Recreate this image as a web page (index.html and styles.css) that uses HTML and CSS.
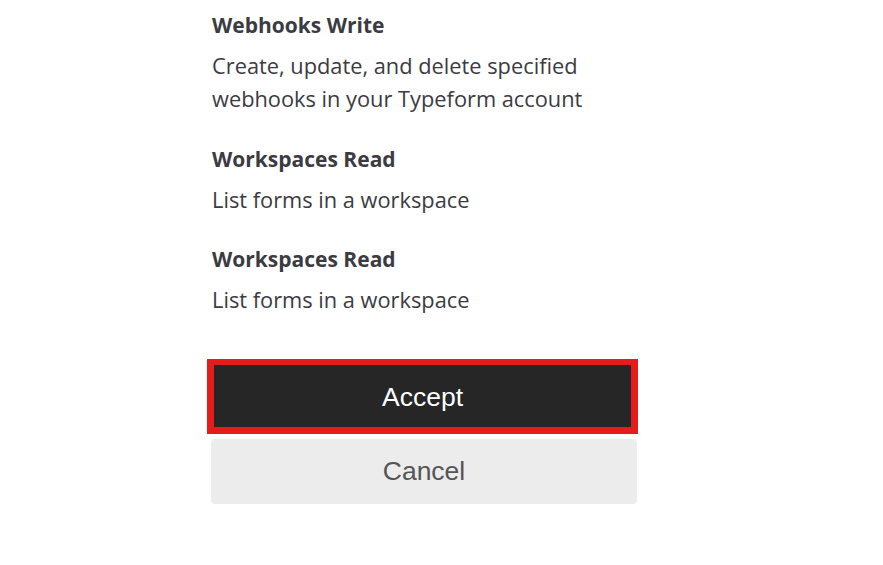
FILE: index.html
```html
<!DOCTYPE html>
<html>
<head>
<meta charset="utf-8">
<link rel="stylesheet" href="styles.css">
</head>
<body>
<div class="page">
  <div class="scopes">
    <div class="scope">
      <div class="scope-title">Webhooks Write</div>
      <div class="scope-desc">Create, update, and delete specified<br>webhooks in your Typeform account</div>
    </div>
    <div class="scope">
      <div class="scope-title">Workspaces Read</div>
      <div class="scope-desc">List forms in a workspace</div>
    </div>
    <div class="scope">
      <div class="scope-title">Workspaces Read</div>
      <div class="scope-desc">List forms in a workspace</div>
    </div>
  </div>
  <div class="actions">
    <button class="btn btn-accept">Accept</button>
    <button class="btn btn-cancel">Cancel</button>
  </div>
</div>
</body>
</html>
```
FILE: styles.css
```css
html, body {
  margin: 0;
  padding: 0;
  background: #ffffff;
}
body {
  font-family: "Open Sans", "Liberation Sans", sans-serif;
  color: #3b3b42;
}
.page {
  padding: 10px 0 0 207px;
  width: 431px;
}
.scopes {
  display: flex;
  flex-direction: column;
  gap: 28.5px;
  padding-left: 5px;
}
.scope-title {
  font-size: 21px;
  font-weight: 700;
  line-height: 30px;
  margin-bottom: 9px;
}
.scope-desc {
  font-size: 21.8px;
  line-height: 33px;
}
.actions {
  margin-top: 43px;
  display: flex;
  flex-direction: column;
  gap: 5px;
}
.btn {
  font-family: "Liberation Sans", Arial, sans-serif;
  font-size: 26.5px;
  border: none;
  cursor: pointer;
}
.btn-accept {
  width: 431px;
  height: 75px;
  background: #262626;
  color: #ffffff;
  border: 7px solid #e41c1c;
  border-top-width: 6px;
  border-bottom-width: 7px;
  padding-top: 3px;
}
.btn-cancel {
  margin-left: 4px;
  width: 426px;
  height: 65px;
  background: #ececec;
  color: #555555;
  border-radius: 4px;
}
```
